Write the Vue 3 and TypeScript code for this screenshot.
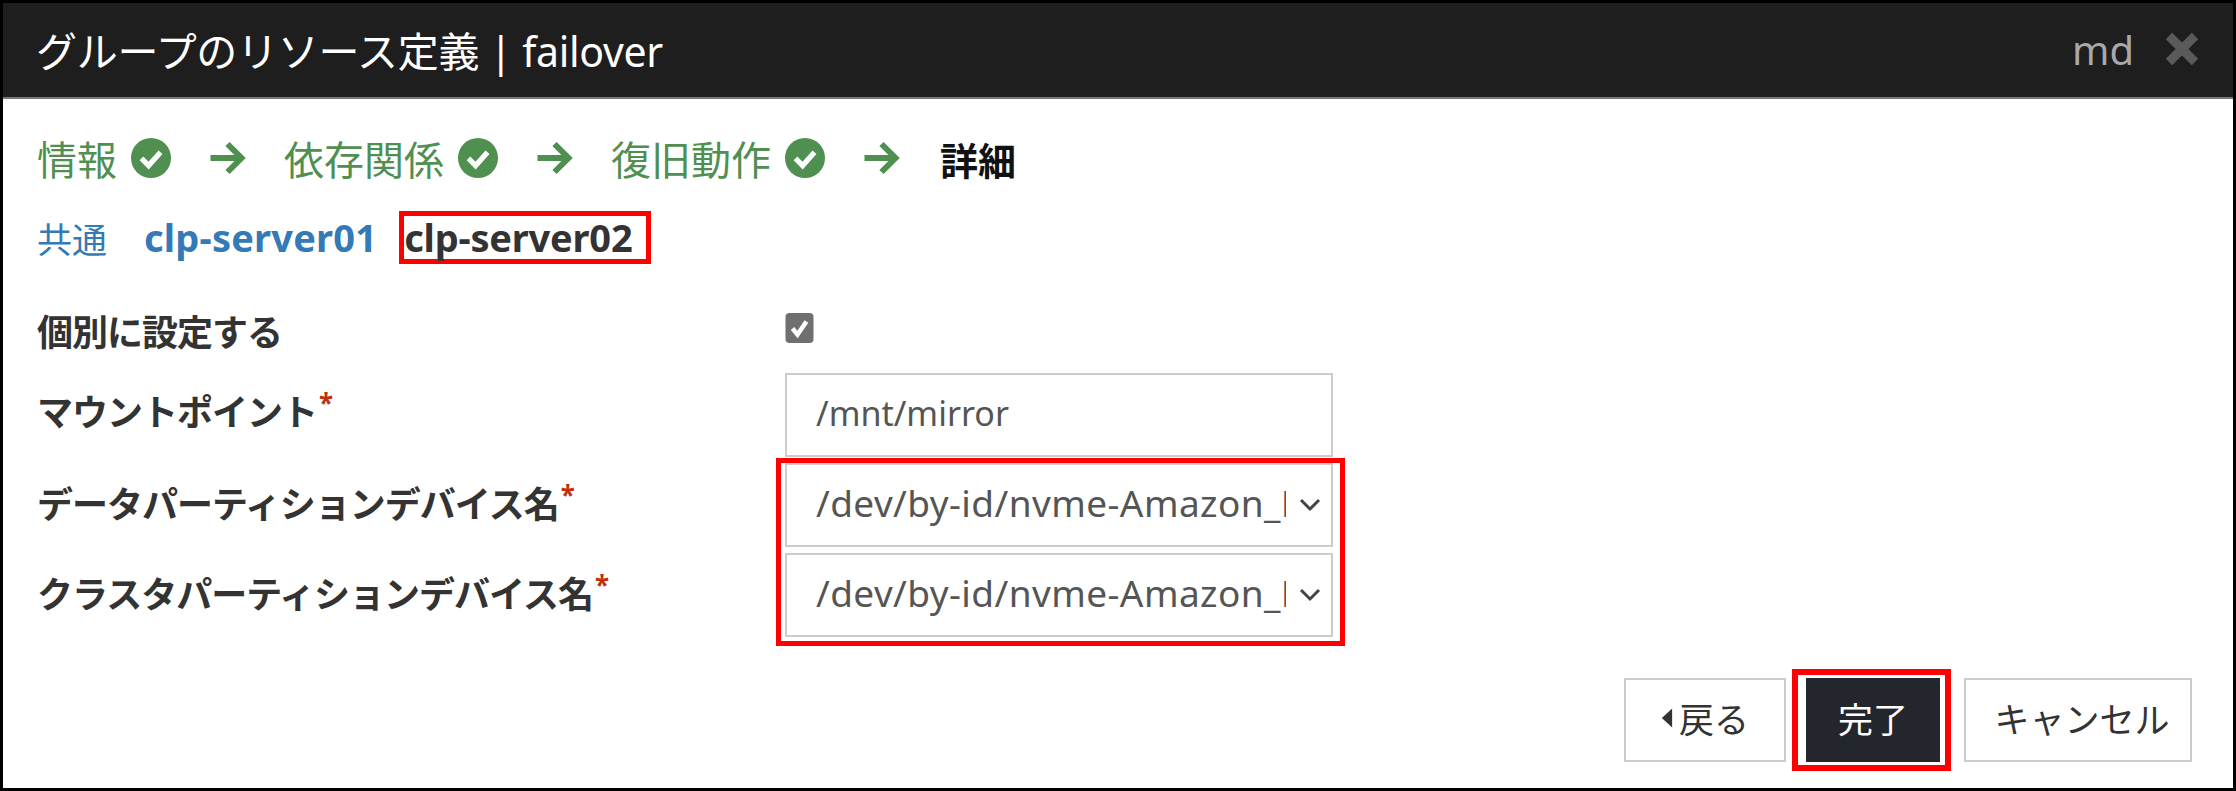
<script setup lang="ts">
const steps: string[] = ['情報', '依存関係', '復旧動作']
const selects: string[] = ['データパーティションデバイス名', 'クラスタパーティションデバイス名']
</script>

<template>
  <div class="dialog">
    <header class="head">
      <h1 class="title">グループのリソース定義 | failover</h1>
      <div class="head-right">
        <span class="type">md</span>
        <svg class="close" width="36" height="36" viewBox="0 0 36 36">
          <path d="M5 5 L31 31 M31 5 L5 31" stroke="#5a5a5a" stroke-width="9" fill="none" />
        </svg>
      </div>
    </header>
    <main class="body">
      <nav class="steps">
        <template v-for="s in steps" :key="s">
          <span class="step">{{ s }}</span>
          <svg class="ok" width="40" height="40" viewBox="0 0 42 42">
            <circle cx="21" cy="21" r="21" fill="#4f8f50" />
            <path d="M11 21.5 L18.5 29 L31 15" stroke="#fff" stroke-width="5.5" fill="none" />
          </svg>
          <svg class="arrow" width="37" height="34" viewBox="0 0 36 34">
            <path d="M1 17 H31 M18 3 L32 17 L18 31" stroke="#4f8f50" stroke-width="6" fill="none" />
          </svg>
        </template>
        <span class="step current">詳細</span>
      </nav>
      <div class="tabs">
        <span class="tab common">共通</span>
        <span class="tab link">clp-server01</span>
        <span class="tab active">clp-server02</span>
      </div>
      <div class="form">
        <div class="labels">
          <label class="label l-check">個別に設定する</label>
          <label class="label l-mount">マウントポイント<sup class="req">*</sup></label>
          <label class="label l-sel" v-for="s in selects" :key="s">{{ s }}<sup class="req">*</sup></label>
        </div>
        <div class="controls">
          <div class="check">
            <svg width="29" height="30" viewBox="0 0 28 30">
              <rect width="28" height="30" rx="4" fill="#6f6f6f" />
              <path d="M7 15.5 L12 21.5 L21 8.5" stroke="#fff" stroke-width="4.5" fill="none" />
            </svg>
          </div>
          <div class="field">/mnt/mirror</div>
          <div class="mark-group">
            <div class="field select" v-for="s in selects" :key="s">
              <span class="value">/dev/by-id/nvme-Amazon_Elastic</span>
              <svg class="chev" width="22" height="14" viewBox="0 0 22 14">
                <path d="M2 2 L11 11 L20 2" stroke="#444" stroke-width="3" fill="none" />
              </svg>
            </div>
          </div>
        </div>
      </div>
      <footer class="foot">
        <button class="btn back">
          <svg width="12" height="22" viewBox="0 0 14 24"><path d="M13 1 V23 L1 12 Z" fill="#333" /></svg>
          戻る
        </button>
        <button class="btn done">完了</button>
        <button class="btn cancel">キャンセル</button>
      </footer>
    </main>
  </div>
</template>

<style>
html, body { margin: 0; background: #fff; }
</style>

<style scoped>
.dialog {
  box-sizing: border-box;
  width: 2236px;
  height: 791px;
  border: 3px solid #000;
  background: #fff;
  font-family: "Noto Sans", "Noto Sans CJK JP", sans-serif;
  color: #333;
  overflow: hidden;
}
.head {
  box-sizing: border-box;
  height: 96px;
  background: #1e1e1e;
  border-bottom: 2px solid #777;
  display: flex;
  align-items: center;
  justify-content: space-between;
  padding: 0 33px 2px 33px;
}
.title {
  margin: 0;
  font-size: 41px;
  font-weight: 400;
  color: #fff;
  letter-spacing: -0.3px;
}
.head-right { display: flex; align-items: center; gap: 30px; }
.type { font-size: 40px; color: #a8a8a8; }
.close { display: block; }
.body { padding: 0 34px; }
.steps {
  display: flex;
  align-items: center;
  height: 60px;
  margin-top: 29px;
}
.step { font-size: 40px; color: #4f8f50; margin-right: 14px; }
.step.current { color: #111; font-weight: 700; font-size: 38px; margin-left: 2px; }
.ok { margin-right: 38px; }
.arrow { margin-right: 38px; }
.tabs {
  display: flex;
  align-items: center;
  height: 54px;
  margin-top: 22px;
}
.tab { font-size: 38px; }
.common { color: #337ab7; font-size: 35px; margin-right: 37px; }
.link { color: #337ab7; font-weight: 700; margin-right: 22px; letter-spacing: 0.2px; }
.active {
  box-sizing: border-box;
  height: 53px;
  display: flex;
  align-items: center;
  font-weight: 700;
  color: #333;
  border: 5px solid #f00;
  padding: 0 14px 0 0;
  letter-spacing: -0.2px;
}
.form {
  display: flex;
  margin-top: 49px;
}
.labels { width: 748px; flex: none; }
.label {
  display: block;
  font-size: 36px;
  font-weight: 700;
  color: #333;
  letter-spacing: -1px;
  white-space: nowrap;
}
.l-check { height: 60px; line-height: 40px; }
.l-mount { height: 90px; line-height: 80px; }
.l-sel { height: 90px; line-height: 84px; }
.req { color: #c0300a; font-size: 26px; vertical-align: super; line-height: 0; margin-left: 2px; }
.controls { width: 548px; flex: none; }
.check { height: 60px; }
.check svg { display: block; }
.field {
  box-sizing: border-box;
  width: 548px;
  height: 84px;
  border: 2px solid #ccc;
  padding: 0 0 5px 29px;
  display: flex;
  align-items: center;
  font-size: 34px;
  color: #555;
  white-space: nowrap;
}
.mark-group {
  position: relative;
  margin-top: 6px;
  display: flex;
  flex-direction: column;
  gap: 6px;
}
.mark-group::after {
  content: "";
  position: absolute;
  inset: -5px -12px -9px -9px;
  border: 5px solid #f00;
  pointer-events: none;
}
.select { justify-content: space-between; padding-right: 10px; font-size: 37px; letter-spacing: 0.42px; }
.value { overflow: hidden; width: 470px; }
.chev { margin-top: 5px; }
.foot {
  display: flex;
  justify-content: flex-end;
  align-items: center;
  margin-top: 35px;
  padding-right: 7px;
}
.btn {
  box-sizing: border-box;
  height: 84px;
  font: inherit;
  font-size: 35px;
  border: 2px solid #ccc;
  background: #fff;
  color: #333;
  padding: 0 0 5px;
}
.back { width: 162px; display: flex; align-items: center; justify-content: center; gap: 6px; margin-right: 20px; }
.done {
  position: relative;
  width: 134px;
  background: #24262d;
  color: #fff;
  border-color: #24262d;
  margin-right: 24px;
}
.done::after {
  content: "";
  position: absolute;
  inset: -11px -13px -11px -16px;
  border: 6px solid #f00;
  pointer-events: none;
}
.cancel { width: 228px; padding-left: 8px; }
</style>
